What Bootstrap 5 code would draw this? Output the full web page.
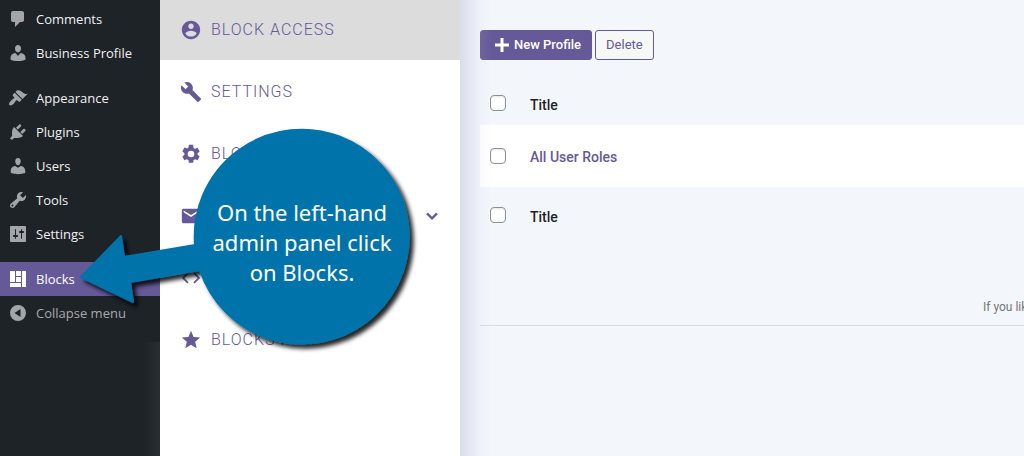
<!DOCTYPE html>
<html lang="en">
<head>
<meta charset="utf-8">
<meta name="viewport" content="width=device-width, initial-scale=1">
<title>Block Access</title>
<link href="https://cdn.jsdelivr.net/npm/bootstrap@5.3.0/dist/css/bootstrap.min.css" rel="stylesheet">
<style>
  :root { --plum: #655997; --ink: #1d2327; --canvas: #f3f6fb; }
  body { background: var(--canvas); font-family: Roboto, sans-serif; font-size: 14px; }
  a { text-decoration: none; }

  .admin-menu { width: 160px; background: var(--ink); font: 13px/18px "Open Sans", "Noto Sans", sans-serif; padding-top: 2px; }
  .admin-menu a, .admin-menu button { height: 34px; padding: 0 8px; gap: 8px; color: #f0f0f1; font: inherit; }
  .admin-menu svg { width: 20px; height: 20px; fill: #a2a6ab; }
  .admin-menu .current { background: var(--plum); color: #fff; }
  .admin-menu .current svg { fill: #fff; }
  .admin-menu button { color: #a7aaad; }
  .menu-gap { height: 11px; }
  .menu-rest { margin-top: 12px; background: linear-gradient(to left, #282e31, transparent 16px); }

  .tab-menu { width: 300px; }
  .tab-menu a { height: 62px; padding: 2px 17px 0 20px; gap: 9px; color: var(--plum); font-size: 16px; font-weight: 300; letter-spacing: 1px; }
  .tab-menu a:first-child { height: 60px; padding-top: 0; background: #dcdcdc; }
  .tab-menu svg { width: 22px; height: 22px; fill: var(--plum); }

  main { padding: 30px 0 0 20px; min-width: 0; }
  main::before { content: ""; position: absolute; inset: 0 auto 0 0; width: 32px; pointer-events: none; z-index: 1;
    background: linear-gradient(to right, rgba(200,205,226,.6), rgba(200,205,226,.3) 12px, rgba(200,205,226,.1) 20px, rgba(200,205,226,0)); }
  .tool-bar { gap: 3px; }
  .tool-btn { height: 30px; border: 1px solid var(--plum); border-radius: 3px; padding: 0 10px; font-size: 13px; line-height: 18px; color: var(--plum); background: #f6f7f7; }
  .tool-btn.solid { background: var(--plum); color: #fff; font-weight: 500; padding: 0 10px 0 13px; gap: 4px; }
  .profile-table { margin-top: 23px; font-weight: 500; color: var(--ink); }
  .profile-table th, .profile-table td { padding: 0 0 0 10px; height: 42px; font-weight: 500; line-height: 20px; }
  .profile-table .pick { width: 40px; padding-bottom: 2px; }
  .profile-table tbody td { height: 62px; background: #fff; }
  .profile-table thead .head, .profile-table tbody .head { padding-top: 2px; }
  .profile-table tbody .pick { padding-bottom: 0; }
  .profile-table tfoot th { height: 60px; }
  .profile-table tfoot .pick { padding-bottom: 4px; }
  .profile-table a { color: var(--plum); }
  .profile-table input { appearance: none; display: block; width: 16px; height: 16px; margin: 0; border: 1px solid #8c8f94; border-radius: 4px; background: #fff; box-shadow: inset 0 1px 2px rgba(0,0,0,.1); }
  .foot-note { margin-top: 49px; padding-top: 1px; height: 30px; border-bottom: 1px solid #d9dbe2; color: #777; font-size: 12px; line-height: 20px; }
  .foot-note span { width: 41px; }

  .callout { left: 76px; top: 120px; width: 350px; height: 240px; pointer-events: none; }
  .callout-text { left: 118px; top: 77px; width: 216px; font: 22px/30px "Noto Sans", "Open Sans", sans-serif; color: #fff; }
</style>
</head>
<body>
<div class="d-flex min-vh-100 position-relative overflow-hidden">

  <nav class="admin-menu d-flex flex-column flex-shrink-0" aria-label="Admin">
    <a href="#" class="d-flex align-items-center"><svg viewBox="0 0 20 20"><path d="M5 2h9c1.100 0 2 .9 2 2v7c0 1.100-.9 2-2 2h-2l-5 5v-5H5c-1.100 0-2-.9-2-2V4c0-1.100.9-2 2-2z"/></svg>Comments</a>
    <a href="#" class="d-flex align-items-center"><svg viewBox="0 0 20 20"><path d="M10 2c1.800 0 3 1.500 3 3.500S11.700 9.400 10 9.400 7 7.500 7 5.500 8.200 2 10 2zM7.500 10l2.500 3 2.500-3c3 .1 5 2 5 5v1.500c-1.800 1.300-4.300 1.500-7.500 1.500s-5.700-.2-7.500-1.500V15c0-3 2-4.900 5-5z"/></svg>Business Profile</a>
    <div class="menu-gap"></div>
    <a href="#" class="d-flex align-items-center"><svg viewBox="0 0 20 20"><path d="M14.480 11.060 7.410 3.990l1.500-1.500c.5-.56 2.300-.47 3.510.32 1.210.8 1.430 1.280 2.910 2.100 1.180.64 2.450 1.260 4.450.85zm-.71.71L6.700 4.700 4.930 6.470c-.39.39-.39 1.020 0 1.410l1.060 1.060c.39.39.39 1.030 0 1.420-.6.6-1.430 1.110-2.210 1.690-.35.26-.7.53-1.010.84C1.430 14.230.4 16.080 1.400 17.070c.99 1 2.840-.03 4.180-1.360.31-.31.58-.66.85-1.020.57-.78 1.080-1.610 1.690-2.210.39-.39 1.020-.39 1.410 0l1.060 1.060c.39.39 1.020.39 1.410 0z"/></svg>Appearance</a>
    <a href="#" class="d-flex align-items-center"><svg viewBox="0 0 20 20"><path d="M13.110 4.360 9.870 7.600 8 5.730l3.240-3.240c.35-.34 1.050-.2 1.560.32.52.51.66 1.210.31 1.550zm-8 1.770.91-1.120 9.010 9.010-1.190.84c-.71.71-2.630 1.160-3.820 1.160H6.140L4.900 17.260c-.59.59-1.540.59-2.120 0-.59-.58-.59-1.530 0-2.120l1.240-1.240v-3.880c0-1.130.4-3.190 1.090-3.890zm7.260 3.970 3.240-3.240c.34-.35 1.040-.21 1.550.31.520.51.66 1.210.31 1.550l-3.240 3.250z"/></svg>Plugins</a>
    <a href="#" class="d-flex align-items-center"><svg viewBox="0 0 20 20"><path d="M10 9.250c-2.270 0-2.730-3.440-2.730-3.440C7 4.020 7.820 2 9.970 2c2.160 0 2.980 2.020 2.710 3.810 0 0-.41 3.440-2.680 3.440zm0 2.570L12.720 10c2.390 0 4.520 2.330 4.520 4.530v2.490s-3.650 1.130-7.240 1.130c-3.650 0-7.240-1.130-7.240-1.130v-2.490c0-2.250 1.940-4.480 4.470-4.480z"/></svg>Users</a>
    <a href="#" class="d-flex align-items-center"><svg viewBox="0 0 20 20"><path d="M16.680 9.770c-1.340 1.340-3.300 1.670-4.950.99l-5.410 6.520c-.99.99-2.590.99-3.580 0s-.99-2.590 0-3.570l6.520-5.420c-.68-1.650-.35-3.610.99-4.950 1.280-1.280 3.120-1.620 4.720-1.060l-2.890 2.890 2.820 2.820 2.860-2.870c.53 1.580.18 3.390-1.080 4.650zM3.810 16.210c.4.390 1.040.39 1.430 0 .4-.4.4-1.040 0-1.430-.39-.4-1.030-.4-1.430 0-.39.390-.39 1.030 0 1.430z"/></svg>Tools</a>
    <a href="#" class="d-flex align-items-center"><svg viewBox="0 0 20 20"><path d="M18 17V3c0-.55-.45-1-1-1H3c-.55 0-1 .45-1 1v14c0 .55.45 1 1 1h14c.55 0 1-.45 1-1zM8 11h1c.55 0 1 .45 1 1s-.45 1-1 1H8v1.500c0 .28-.22.5-.5.5s-.5-.22-.5-.5V13H6c-.55 0-1-.45-1-1s.45-1 1-1h1V5.500c0-.28.22-.5.5-.5s.5.220.5.500V11zm5-2h-1c-.55 0-1-.45-1-1s.45-1 1-1h1V5.500c0-.28.22-.5.5-.5s.5.220.5.500V7h1c.55 0 1 .45 1 1s-.45 1-1 1h-1v5.500c0 .28-.22.5-.5.5s-.5-.22-.5-.5V9z"/></svg>Settings</a>
    <div class="menu-gap"></div>
    <a href="#" class="current d-flex align-items-center" aria-current="page"><svg viewBox="0 0 20 20"><path d="M2 2h5v11H2zM8 2h5v5H8zM14 2h4v16h-4zM8 8h5v5H8zM2 14h11v4H2z"/></svg>Blocks</a>
    <button type="button" class="btn border-0 rounded-0 d-flex align-items-center"><svg viewBox="0 0 20 20"><path fill-rule="evenodd" d="M10 2a8 8 0 1 0 0 16 8 8 0 0 0 0-16zM12.500 6v8L6.500 10z"/></svg>Collapse menu</button>
    <div class="menu-rest flex-grow-1"></div>
  </nav>

  <nav class="tab-menu bg-white flex-shrink-0" aria-label="Sections">
    <a href="#" class="d-flex align-items-center"><svg viewBox="0 0 24 24"><path d="M12 2C6.480 2 2 6.480 2 12s4.480 10 10 10 10-4.480 10-10S17.520 2 12 2zm0 3c1.660 0 3 1.340 3 3s-1.340 3-3 3-3-1.340-3-3 1.340-3 3-3zm0 14.200c-2.500 0-4.710-1.280-6-3.220.03-1.990 4-3.080 6-3.080 1.990 0 5.970 1.090 6 3.080-1.290 1.940-3.500 3.220-6 3.220z"/></svg>BLOCK ACCESS</a>
    <a href="#" class="d-flex align-items-center"><svg viewBox="0 0 24 24"><path d="M22.700 19l-9.100-9.100c.9-2.300.4-5-1.500-6.900-2-2-5-2.400-7.400-1.300L9 6 6 9 1.600 4.700C.4 7.100.9 10.100 2.900 12.100c1.900 1.900 4.600 2.400 6.900 1.500l9.100 9.100c.4.4 1 .4 1.400 0l2.300-2.300c.5-.4.5-1.100.1-1.400z"/></svg>SETTINGS</a>
    <a href="#" class="d-flex align-items-center"><svg viewBox="0 0 24 24"><path d="M19.140 12.940c.04-.3.060-.61.060-.94s-.02-.64-.07-.94l2.030-1.580a.49.49 0 0 0 .12-.61l-1.920-3.320a.49.49 0 0 0-.59-.22l-2.390.96a7 7 0 0 0-1.620-.94l-.36-2.540A.48.48 0 0 0 13.920 2h-3.840c-.24 0-.43.17-.47.410l-.36 2.540c-.59.240-1.130.57-1.620.94l-2.390-.96a.48.48 0 0 0-.59.220L2.740 8.870a.47.47 0 0 0 .12.610l2.030 1.580c-.05.3-.09.63-.09.94s.02.640.07.940l-2.030 1.580a.49.49 0 0 0-.12.610l1.920 3.320c.12.220.37.290.59.220l2.390-.96c.5.380 1.030.7 1.620.94l.36 2.540c.05.240.24.410.48.410h3.840c.24 0 .44-.17.470-.41l.36-2.540a7 7 0 0 0 1.620-.94l2.390.96c.22.080.47 0 .59-.22l1.920-3.320a.47.47 0 0 0-.12-.61zM12 15.600a3.600 3.600 0 1 1 0-7.200 3.600 3.600 0 0 1 0 7.200z"/></svg>BLOCKS</a>
    <a href="#" class="d-flex align-items-center justify-content-between" aria-label="Mail"><svg viewBox="0 0 24 24"><path d="M20 4H4c-1.100 0-2 .9-2 2v12c0 1.100.9 2 2 2h16c1.100 0 2-.9 2-2V6c0-1.100-.9-2-2-2zm0 4-8 5-8-5V6l8 5 8-5z"/></svg><svg viewBox="0 0 24 24"><path d="M7.410 8.590 12 13.170l4.590-4.580L18 10l-6 6-6-6z" stroke="#655997" stroke-width=".6"/></svg></a>
    <a href="#" class="d-flex align-items-center" aria-label="Code"><svg viewBox="0 0 24 24"><path d="M9.400 16.600 4.800 12l4.600-4.600L8 6l-6 6 6 6zm5.200 0 4.600-4.600-4.600-4.600L16 6l6 6-6 6z"/></svg></a>
    <a href="#" class="d-flex align-items-center"><svg viewBox="0 0 24 24"><path d="M12 17.270 18.180 21l-1.640-7.030L22 9.240l-7.190-.61L12 2 9.190 8.630 2 9.240l5.460 4.730L5.820 21z"/></svg>BLOCKS PRO</a>
  </nav>

  <main class="flex-grow-1 position-relative">
    <div class="tool-bar d-flex">
      <button type="button" class="tool-btn solid d-flex align-items-center"><svg width="16" height="16" viewBox="0 0 16 16"><path d="M8 1v14M1 8h14" stroke="#fff" stroke-width="3"/></svg>New Profile</button>
      <button type="button" class="tool-btn">Delete</button>
    </div>
    <table class="profile-table w-100">
      <thead><tr><th class="pick"><input type="checkbox" aria-label="Select all"></th><th class="head">Title</th></tr></thead>
      <tbody><tr><td class="pick"><input type="checkbox" aria-label="Select All User Roles"></td><td class="head"><a href="#">All User Roles</a></td></tr></tbody>
      <tfoot><tr><th class="pick"><input type="checkbox" aria-label="Select all"></th><th>Title</th></tr></tfoot>
    </table>
    <div class="foot-note d-flex justify-content-end overflow-hidden"><span class="text-nowrap">If you like</span></div>
  </main>

  <div class="callout position-absolute z-2">
    <svg class="position-absolute top-0 start-0 overflow-visible" width="350" height="240" viewBox="76 120 350 240">
      <defs><filter id="drop" x="-10%" y="-10%" width="125%" height="125%"><feDropShadow dx="4" dy="4" stdDeviation="2" flood-color="#000" flood-opacity=".85"/></filter></defs>
      <path filter="url(#drop)" fill="#0073aa" stroke="#0073aa" stroke-width="2" stroke-linejoin="round" d="M81 277 121 236 124 257 195 245 A107 107 0 1 1 200 270 L130 282 133 302Z"/>
    </svg>
    <div class="callout-text position-absolute text-center">On the left-hand<br>admin panel click<br>on Blocks.</div>
  </div>
</div>
<script src="https://cdn.jsdelivr.net/npm/bootstrap@5.3.0/dist/js/bootstrap.bundle.min.js"></script>
</body>
</html>
